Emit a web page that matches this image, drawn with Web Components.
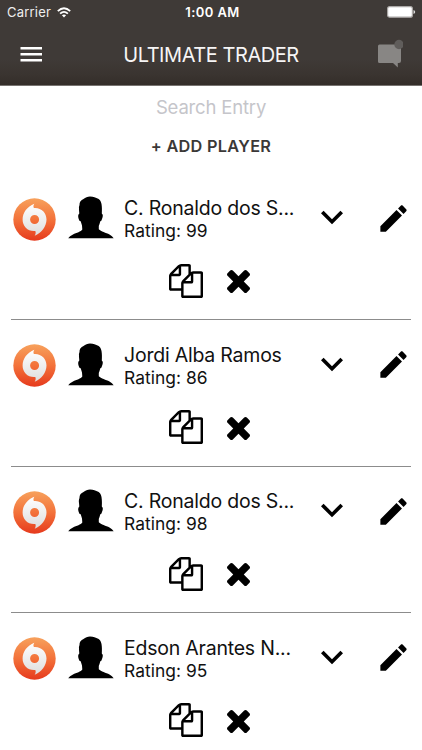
<!DOCTYPE html>
<html lang="en"><head><meta charset="utf-8"><title>Ultimate Trader</title>
<style>
html,body{margin:0;background:#fff}
body{font-family:Inter,"Liberation Sans",sans-serif;color:#111;width:422px;height:750px;overflow:hidden}
</style></head><body>
<trader-app></trader-app>
<script>
const define = (name, html) => customElements.define(name, class extends HTMLElement {
  constructor() {
    super();
    const t = document.createElement('template');
    t.innerHTML = html;
    this.attachShadow({mode: 'open'}).append(t.content.cloneNode(true));
  }
});

define('status-bar', `<style>
:host{display:grid;grid-template-columns:1fr auto 1fr;height:24px;align-items:center;color:#eee;font-size:13px;line-height:24px;padding:0 6px 0 7px;white-space:nowrap}
.l{display:flex;align-items:center;gap:6px;letter-spacing:.2px}
.c{font-weight:600;color:#fff;letter-spacing:.4px;padding-left:2px}
.r{display:flex;justify-content:flex-end}
svg{display:block}
</style>
<div class="l"><span>Carrier</span><svg width="14" height="11" viewBox="0 0 14 11" fill="none" stroke="#fff" stroke-width="1.8"><path d="M.8 4.2Q7-1.6 13.2 4.2M3.1 6.7Q7 3.1 10.9 6.7"/><path d="M7 10.4L4.9 8.3Q7 6.8 9.1 8.3Z" fill="#fff" stroke="none"/></svg></div>
<div class="c">1:00 AM</div>
<div class="r"><svg width="29" height="12" viewBox="0 0 29 12"><rect x=".6" y=".6" width="24.8" height="10.6" rx="2" fill="#fff" stroke="#aaa7a5" stroke-width="1.2"/><path d="M26.5 4Q28.2 4.500 28.2 6T26.500 8Z" fill="#ddd"/></svg></div>`);

define('nav-bar', `<style>
:host{display:grid;grid-template-columns:60px 1fr 60px;height:61px;align-items:center;color:#f6f5f5}
svg{display:block}
.t{font-size:20px;line-height:24px;text-align:center;font-weight:400;white-space:nowrap;letter-spacing:-.45px}
.m{margin:-1px 0 0 20px}.n{margin:-2px 0 0 13px}
</style>
<svg class="m" width="22" height="16" viewBox="0 0 22 16" fill="#fff"><path d="M.5 1h21.500v2.400H.5zM.5 7h21.500v2.400H.5zM.5 13h21.500v2.400H.5z"/></svg>
<div class="t"><slot></slot></div>
<svg class="n" width="28" height="29" viewBox="0 0 28 29"><path d="M4.500 5.500H24Q26 5.500 26 7.500V22Q26 24 24 24H22.800V28.500L18 24H4.500Q3 24 3 22.500V7Q3 5.500 4.500 5.500Z" fill="#888684"/><circle cx="24" cy="5.500" r="4.700" fill="#605d5b"/></svg>`);

define('app-header', `<style>
:host{display:block;height:86px;box-sizing:border-box;border-bottom:1px solid #777370;background:linear-gradient(#3f3a37 0,#3f3a37 70%,#3a3430 88%,#332d29 100%)}
</style><status-bar></status-bar><nav-bar><slot></slot></nav-bar>`);

define('search-panel', `<style>
:host{display:flex;flex-direction:column;align-items:center;height:87.500px;box-sizing:border-box;padding-top:9px;white-space:nowrap}
.s{font-size:18.500px;line-height:24px;color:#c5c5ca;letter-spacing:-.18px}
.a{margin-top:15px;font-size:16.300px;line-height:24px;font-weight:600;color:#3b3837;letter-spacing:.3px}
</style><div class="s">Search Entry</div><div class="a">+ ADD PLAYER</div>`);

define('origin-badge', `<style>:host{display:block}svg{display:block}</style>
<svg width="43" height="43" viewBox="0 0 43 43"><defs><linearGradient id="o" x2="0" y2="1"><stop stop-color="#f7a15c"/><stop offset=".5" stop-color="#f3723a"/><stop offset="1" stop-color="#e63a1d"/></linearGradient><linearGradient id="w" x2="0" y2="1"><stop stop-color="#fff"/><stop offset="1" stop-color="#dedddd"/></linearGradient></defs>
<circle cx="21.500" cy="21.500" r="21.200" fill="url(#o)"/>
<path fill-rule="evenodd" fill="url(#w)" d="M21.300 5.800C20.300 7.700 20.200 8.800 20.900 10C28 9.300 33.500 14.500 33.500 21.500C33.500 28.500 28.500 34.800 21.700 37.800C22.700 36 23 34.500 22.300 33C15 33.700 9.600 28.500 9.600 21.500C9.600 14.500 14.200 8.800 21.300 5.800ZM21.600 17A4.500 4.500 0 1 0 21.600 26A4.500 4.500 0 1 0 21.600 17Z"/></svg>`);

define('player-photo', `<style>:host{display:block;margin-top:-3px}svg{display:block}</style>
<svg width="46" height="43" viewBox="0 0 46 43"><path d="M22 .4C26 .4 27.500 1.500 29 2.200C31.500 3 33 5 33.500 8C34 11 34 14 33.800 17.500C35.300 18.500 35 20.500 34 23Q33.300 25.500 32.300 25.200Q31.600 28 30.800 30V33.300C33 35.700 38 36.700 41.500 38.500Q44.300 40 45.700 42.300H.2Q1.500 40 5 38.500C8.500 36.700 13 35.800 14.300 33.500L14 29.500L12.700 25.200Q11.300 25.400 10.700 23C9.900 20.500 9.900 18.800 11.300 17.500L11 14Q10.500 11 11.500 9C11.300 6 13 4 15.500 3C17.500 1.200 19.500 .6 22 .4Z"/></svg>`);

define('player-row', `<style>
:host{display:block;height:146.670px;box-sizing:border-box;margin:0 11px;border-bottom:1px solid #8c8c8c;padding-top:22.500px}
svg{display:block}
.top{display:grid;grid-template-columns:55px 56px 186px 66px 36px;height:46px;align-items:center;padding-left:2px}
.x{white-space:nowrap;padding-top:1px}
.n{font-size:19.500px;line-height:23px;letter-spacing:-.22px}
.r{font-size:17.400px;line-height:22px;letter-spacing:.05px}
.c{margin-top:-4px}
.b{display:flex;gap:24px;align-items:center;padding:21.500px 0 0 158px}
.k{margin-top:2px}
.p{margin-top:-2px}
</style>
<div class="top"><origin-badge></origin-badge><player-photo></player-photo>
<div class="x"><div class="n"><slot name="name"></slot></div><div class="r"><slot name="rating"></slot></div></div>
<svg class="c" width="44" height="44" viewBox="0 0 24 24"><path d="M16.590 8.590L12 13.170 7.410 8.590 6 10l6 6 6-6z"/></svg>
<svg class="p" width="35" height="35" viewBox="0 0 24 24"><path d="M3 17.250V21h3.750L17.810 9.940l-3.750-3.750L3 17.250zM20.710 7.040c.39-.39.39-1.020 0-1.410l-2.340-2.340c-.39-.39-1.020-.39-1.410 0l-1.830 1.830 3.750 3.750 1.830-1.830z"/></svg></div>
<div class="b"><svg width="34" height="34" viewBox="0 0 1792 1792"><path d="M1696 384q40 0 68 28t28 68v1216q0 40-28 68t-68 28h-960q-40 0-68-28t-28-68v-288h-544q-40 0-68-28t-28-68v-672q0-40 20-88t48-76l408-408q28-28 76-48t88-20h416q40 0 68 28t28 68v328q68-40 128-40h416zm-544 213l-299 299h299v-299zm-640-384l-299 299h299v-299zm196 647l316-316v-416h-384v416q0 40-28 68t-68 28h-416v640h512v-256q0-40 20-88t48-76zm956 804v-1152h-384v416q0 40-28 68t-68 28h-416v640h896z"/></svg>
<svg class="k" width="23" height="23" viewBox="302 366 1188 1188"><path d="M1490 1322q0 40-28 68l-136 136q-28 28-68 28t-68-28l-294-294-294 294q-28 28-68 28t-68-28l-136-136q-28-28-28-68t28-68l294-294-294-294q-28-28-28-68t28-68l136-136q28-28 68-28t68 28l294 294 294-294q28-28 68-28t68 28l136 136q28 28 28 68t-28 68l-294 294 294 294q28 28 28 68z"/></svg></div>`);

define('trader-app', `<style>:host{display:block}</style>
<app-header>ULTIMATE TRADER</app-header>
<search-panel></search-panel>
<player-row><span slot="name">C. Ronaldo dos S...</span><span slot="rating">Rating: 99</span></player-row>
<player-row><span slot="name">Jordi Alba Ramos</span><span slot="rating">Rating: 86</span></player-row>
<player-row><span slot="name">C. Ronaldo dos S...</span><span slot="rating">Rating: 98</span></player-row>
<player-row><span slot="name">Edson Arantes N...</span><span slot="rating">Rating: 95</span></player-row>`);
</script></body></html>
